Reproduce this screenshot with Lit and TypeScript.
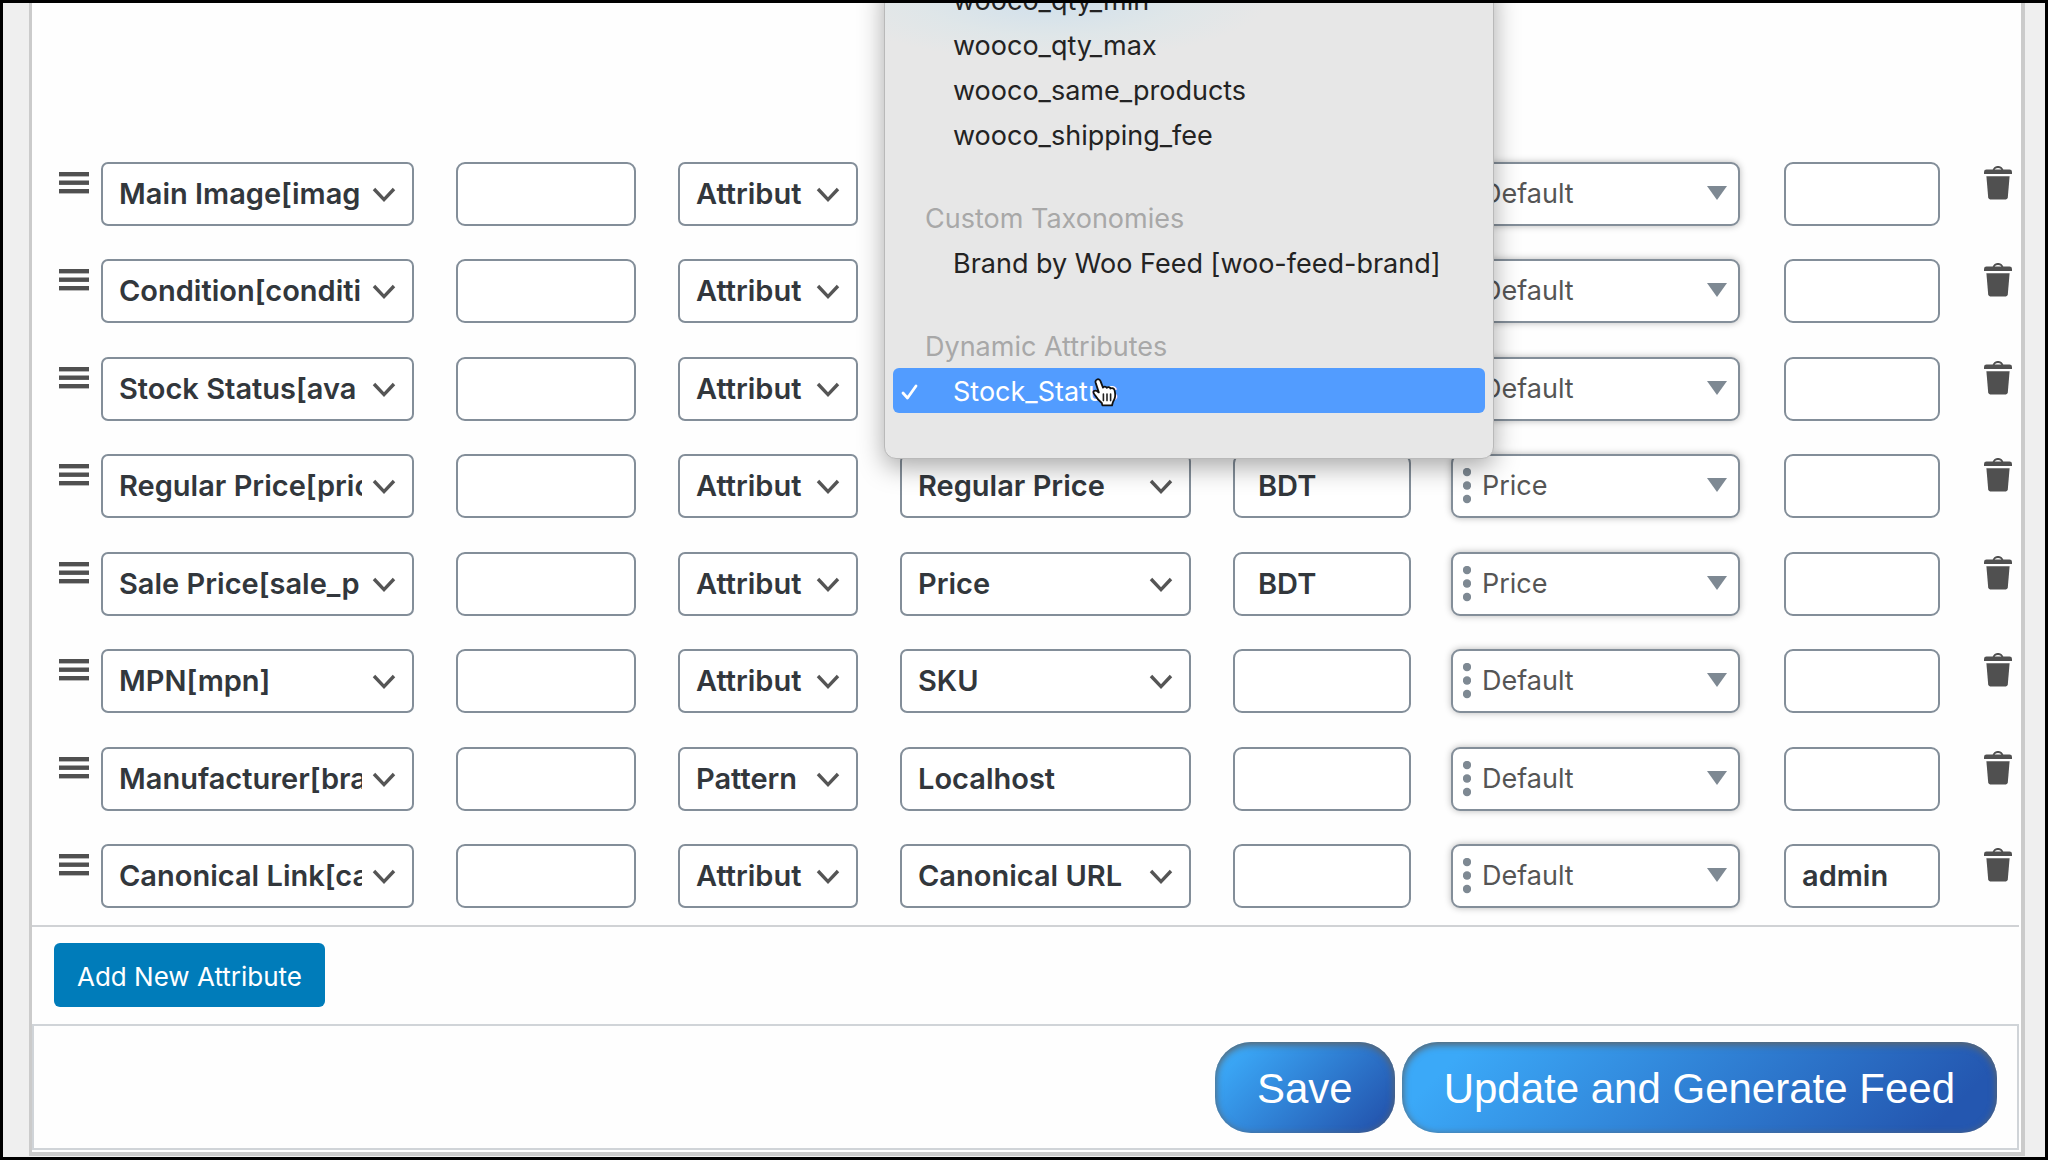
import { LitElement, html, css, svg, nothing } from "lit";
import { customElement, property, state } from "lit/decorators.js";
import { classMap } from "lit/directives/class-map.js";

interface FeedRow {
  merchant: string;
  type: string;
  source?: string;
  freeText?: boolean;
  menuOpen?: boolean;
  suffix: string;
  output: string;
  limit: string;
}

const ROWS: FeedRow[] = [
  { merchant: "Main Image[imag", type: "Attribut", suffix: "", output: "Default", limit: "" },
  { merchant: "Condition[conditi", type: "Attribut", suffix: "", output: "Default", limit: "" },
  { merchant: "Stock Status[ava", type: "Attribut", source: "Stock_Status", menuOpen: true, suffix: "", output: "Default", limit: "" },
  { merchant: "Regular Price[pric", type: "Attribut", source: "Regular Price", suffix: "BDT", output: "Price", limit: "" },
  { merchant: "Sale Price[sale_p", type: "Attribut", source: "Price", suffix: "BDT", output: "Price", limit: "" },
  { merchant: "MPN[mpn]", type: "Attribut", source: "SKU", suffix: "", output: "Default", limit: "" },
  { merchant: "Manufacturer[bra", type: "Pattern", source: "Localhost", freeText: true, suffix: "", output: "Default", limit: "" },
  { merchant: "Canonical Link[ca", type: "Attribut", source: "Canonical URL", suffix: "", output: "Default", limit: "admin" },
];

const MENU: { heading?: string; items: string[] }[] = [
  { items: ["wooco_qty_min", "wooco_qty_max", "wooco_same_products", "wooco_shipping_fee"] },
  { heading: "Custom Taxonomies", items: ["Brand by Woo Feed [woo-feed-brand]"] },
  { heading: "Dynamic Attributes", items: ["Stock_Status"] },
];

@customElement("attribute-menu")
export class AttributeMenu extends LitElement {
  @property() selected = "";

  static styles = css`
    :host {
      display: block;
      box-sizing: border-box;
      padding: 0 8px 45px;
      border: 1px solid #b9b9b9;
      border-radius: 12px;
      background:
        radial-gradient(ellipse 220px 64px at 165px 20px, #cfdfec, rgba(221, 230, 233, 0.8) 60%, transparent) no-repeat,
        #e7e7e7;
      box-shadow: 0 8px 26px rgba(0, 0, 0, 0.34);
      font: 400 27px/43px Inter, "Liberation Sans", sans-serif;
      color: #232323;
      white-space: nowrap;
    }
    .group + .group {
      margin-top: 38px;
    }
    .heading {
      padding: 2px 0 0 32px;
      color: #a8a8a8;
    }
    .item {
      display: grid;
      grid-template-columns: 52px 1fr;
      align-items: center;
      padding: 2px 0 0 8px;
      border-radius: 6px;
    }
    .selected {
      background: #529cff;
      color: #fff;
    }
    .check {
      display: block;
    }
    .name {
      position: relative;
      justify-self: start;
    }
    .pointer {
      position: absolute;
      left: 139px;
      top: 8px;
    }
  `;

  render() {
    return html`${MENU.map(
      (group) => html`
        <div class="group" role="group" aria-label=${group.heading ?? nothing}>
          ${group.heading ? html`<div class="heading">${group.heading}</div>` : nothing}
          ${group.items.map((name) => this.item(name))}
        </div>
      `
    )}`;
  }

  private item(name: string) {
    const on = name === this.selected;
    return html`
      <div class=${classMap({ item: true, selected: on })} role="option" aria-selected=${on}>
        <span>${on
          ? html`<svg class="check" width="18" height="16" viewBox="0 0 18 16" aria-hidden="true">
              <path d="M2 9 L6.5 14 L15 2" fill="none" stroke="#fff" stroke-width="2.8" stroke-linecap="round" stroke-linejoin="round" />
            </svg>`
          : nothing}</span>
        <span class="name">${name}${on ? this.pointer() : nothing}</span>
      </div>
    `;
  }

  private pointer() {
    return html`<svg class="pointer" width="26" height="29" viewBox="0 0 26 29" aria-hidden="true">
      <path
        d="M5 1.5 C6.6 .8 8 1.8 8.6 3.4 L11 9.6 C11.8 8.2 14 8.3 14.8 9.8 C16 8.6 17.8 9 18.5 10.5 C20.2 9.6 22.2 10.4 22.6 12.4 C23.2 15 23.6 18 22.6 20.6 C21.8 22.6 21 23.6 20.6 25.2 L20 27.4 L10.4 27.4 L9.8 25 C7 22.6 5 20.6 3.6 18 C2.8 16.6 1.2 15.6 1.4 13.8 C2 12 4.4 12.2 6.2 14 L6.8 14.4 L3.6 4.6 C3.2 3.2 3.8 2 5 1.5 Z"
        fill="#fff" stroke="#111" stroke-width="1.8" stroke-linejoin="round" />
      <path d="M11.4 16 V22.6 M15 16 V22.6 M18.6 16 V22.6" stroke="#222" stroke-width="1.6" stroke-linecap="round" />
    </svg>`;
  }
}

@customElement("app-root")
export class AppRoot extends LitElement {
  @state() private rows = ROWS;

  static styles = css`
    :host {
      display: block;
      font-family: Inter, "Liberation Sans", sans-serif;
    }
    * {
      box-sizing: border-box;
    }
    .frame {
      min-height: 100vh;
      overflow: hidden;
      padding: 0 20px 0 26px;
      border: 3px solid #000;
      background: #efefef;
    }
    .panel {
      padding: 159px 0 2px;
      border: solid #cbcbcb;
      border-width: 0 4px 4px 3px;
      background: #fefefe;
    }
    .grid {
      width: 100%;
      table-layout: fixed;
      border-collapse: collapse;
    }
    .c-handle { width: 69px; }
    .c-merchant { width: 355px; }
    .c-short { width: 222px; }
    .c-wide { width: 333px; }
    .c-suffix { width: 218px; }
    .c-limit { width: 200px; }
    .c-remove { width: 37px; }
    td {
      padding: 0 42px 33px 0;
      vertical-align: top;
    }
    tr:nth-child(even) td {
      padding-bottom: 34px;
    }
    tr:last-child td {
      padding-bottom: 17px;
    }
    td.handle {
      padding: 10px 12px 0 27px;
    }
    td.tight {
      padding-right: 40px;
    }
    td.loose {
      padding-right: 44px;
    }
    td.remove {
      padding: 4px 0 0;
    }
    .icon {
      display: block;
      padding: 0;
      border: 0;
      background: none;
      color: #505050;
    }
    .icon svg,
    .field svg {
      display: block;
    }
    .field {
      position: relative;
    }
    .box {
      display: block;
      width: 100%;
      height: 64px;
      margin: 0;
      padding: 0 16px 2px;
      appearance: none;
      border: 2px solid #838e99;
      border-radius: 9px;
      background: #fff;
      color: #32373c;
      font: 600 29px/40px Inter, "Liberation Sans", sans-serif;
    }
    select.box {
      padding: 0 50px 0 16px;
      border-radius: 7px;
    }
    .suffix {
      padding-left: 23px;
    }
    select.output {
      padding: 0 40px 0 29px;
      border-radius: 9px;
      box-shadow: 0 0 7px rgba(0, 0, 0, 0.28);
      color: #555;
      font-size: 27px;
      font-weight: 400;
    }
    .chevron {
      position: absolute;
      right: 18px;
      top: 25px;
      pointer-events: none;
    }
    .dots {
      position: absolute;
      left: 12px;
      top: 14px;
      pointer-events: none;
    }
    .caret {
      position: absolute;
      right: 13px;
      top: 24px;
      pointer-events: none;
    }
    .menu {
      position: absolute;
      z-index: 2;
      left: -16px;
      bottom: -38px;
      width: 610px;
    }
    .add-bar {
      margin-right: 2px;
      padding: 16px 22px 17px;
      border-top: 2px solid #d0d2d5;
    }
    .add {
      height: 64px;
      padding: 3px 23px 0;
      border: 0;
      border-radius: 6px;
      background: #007cba;
      color: #fff;
      font: 400 26px/32px Inter, "Liberation Sans", sans-serif;
    }
    .add,
    .action {
      display: block;
    }
    .actions {
      display: flex;
      justify-content: flex-end;
      gap: 7px;
      margin-right: 2px;
      padding: 16px 20px 15px;
      border: 2px solid #d0d4d8;
    }
    .action {
      height: 91px;
      padding: 2px 42px 0;
      border: 0;
      border-radius: 36px;
      background: linear-gradient(135deg, #3ba9f8 10%, #2457b0 90%);
      box-shadow: inset 0 2px 7px 1px #5b666f;
      color: #fff;
      font: 400 42px/48px "Liberation Sans", Arial, sans-serif;
    }
  `;

  render() {
    return html`
      <main class="frame">
        <section class="panel">
          <table class="grid">
            <colgroup>
              <col class="c-handle" />
              <col class="c-merchant" />
              <col class="c-short" />
              <col class="c-short" />
              <col class="c-wide" />
              <col class="c-suffix" />
              <col class="c-wide" />
              <col class="c-limit" />
              <col class="c-remove" />
            </colgroup>
            <tbody>
              ${this.rows.map((row) => this.row(row))}
            </tbody>
          </table>
          <div class="add-bar">
            <button class="add" type="button">Add New Attribute</button>
          </div>
          <div class="actions">
            <button class="action" type="button">Save</button>
            <button class="action" type="button">Update and Generate Feed</button>
          </div>
        </section>
      </main>
    `;
  }

  private row(row: FeedRow) {
    return html`
      <tr>
        <td class="handle">
          <button class="icon" type="button" aria-label="Move row">
            <svg width="30" height="22" viewBox="0 0 30 22">
              ${[0, 8.5, 17].map((y) => svg`<rect y=${y} width="30" height="4.4" fill="currentColor" />`)}
            </svg>
          </button>
        </td>
        <td>${this.select("Merchant attribute", row.merchant)}</td>
        <td><input class="box" type="text" aria-label="Prefix" /></td>
        <td>${this.select("Type", row.type)}</td>
        <td>
          ${row.freeText
            ? html`<input class="box" type="text" aria-label="Value" .value=${row.source ?? ""} />`
            : this.select("Value", row.source ?? "", row.menuOpen)}
        </td>
        <td class="tight"><input class="box suffix" type="text" aria-label="Suffix" .value=${row.suffix} /></td>
        <td class="loose">${this.output(row.output)}</td>
        <td class="loose"><input class="box" type="text" aria-label="Command" .value=${row.limit} /></td>
        <td class="remove">
          <button class="icon" type="button" aria-label="Delete row">
            <svg width="28" height="34" viewBox="0 0 28 34" fill="currentColor">
              <path d="M9.5 5 C9.5 -.4 18.5 -.4 18.5 5" fill="none" stroke="currentColor" stroke-width="2" />
              <path d="M2.5 3.6 H25.5 Q28 3.6 28 6 V8 H0 V6 Q0 3.6 2.5 3.6 Z" />
              <path d="M2.4 10.2 H25.6 L23.8 31.6 Q23.6 33.4 21.8 33.4 H6.2 Q4.4 33.4 4.2 31.6 Z" />
            </svg>
          </button>
        </td>
      </tr>
    `;
  }

  private select(label: string, value: string, open = false) {
    return html`
      <div class="field">
        <select class="box" aria-label=${label}>
          <option selected>${value}</option>
        </select>
        <svg class="chevron" width="24" height="16" viewBox="0 0 24 16" aria-hidden="true">
          <path d="M2 2 L12 12.6 L22 2" fill="none" stroke="#555" stroke-width="3.4" />
        </svg>
        ${open ? html`<attribute-menu class="menu" role="listbox" .selected=${value}></attribute-menu>` : nothing}
      </div>
    `;
  }

  private output(value: string) {
    return html`
      <div class="field">
        <select class="box output" aria-label="Output type">
          <option selected>${value}</option>
        </select>
        <svg class="dots" width="8" height="36" viewBox="0 0 8 36" aria-hidden="true">
          ${[4, 17.5, 31].map((cy) => svg`<circle cx="4" cy=${cy} r="4.2" fill="#7e8993" />`)}
        </svg>
        <svg class="caret" width="20" height="14" viewBox="0 0 20 14" aria-hidden="true">
          <path d="M0 0 H20 L10 14 Z" fill="#7e8993" />
        </svg>
      </div>
    `;
  }
}
